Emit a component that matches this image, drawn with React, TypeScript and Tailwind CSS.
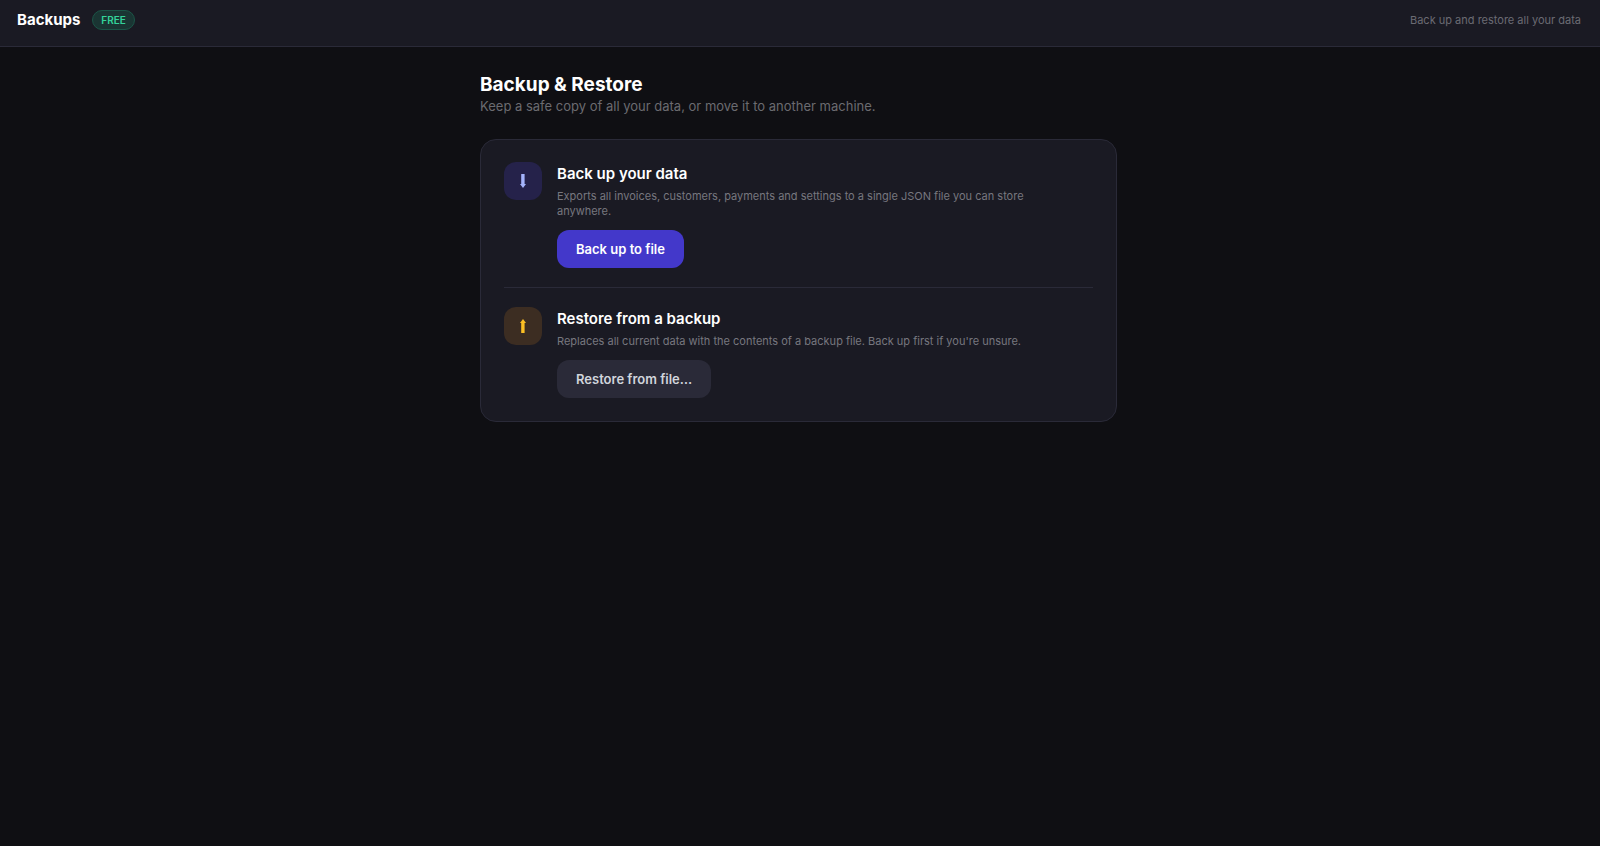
import React from 'react';

interface BackupActionProps {
    title: string;
    description: string;
    icon: React.ReactNode;
    iconClass: string;
    children: React.ReactNode;
}

const ArrowDown: React.FC = () => (
    <svg width="8" height="14" viewBox="0 0 8 14" fill="currentColor" aria-hidden="true">
        <path d="M2.2 0h3.4v10H7L4 14 1 10h1.2z" />
    </svg>
);

const ArrowUp: React.FC = () => (
    <svg width="8" height="14" viewBox="0 0 8 14" fill="currentColor" aria-hidden="true">
        <path d="M2.2 14h3.4V4H7L4 0 1 4h1.2z" />
    </svg>
);

const BackupAction: React.FC<BackupActionProps> = ({ title, description, icon, iconClass, children }) => (
    <div className="flex items-start gap-[15px]">
        <div className={`flex size-[38px] shrink-0 items-center justify-center rounded-xl ${iconClass}`}>
            {icon}
        </div>
        <div className="min-w-0 flex-1">
            <h2 className="mb-[3px] text-[15px] leading-6 font-semibold text-white">{title}</h2>
            <p className="mb-[11px] max-w-[510px] text-[11px] leading-[15px] text-[#77777f]">{description}</p>
            {children}
        </div>
    </div>
);

export default function App() {
    return (
        <div className="min-h-screen bg-[#0f0f13] font-['Inter',sans-serif]">
            <header className="flex items-center justify-between border-b border-[#2a2a38] bg-[#1a1a23] pt-[10px] pr-[19px] pb-4 pl-[17px]">
                <div className="flex items-center gap-3">
                    <h1 className="text-[15px] leading-5 font-bold text-white">Backups</h1>
                    <span className="rounded-full border border-[#1b5547] bg-[#1a3533] px-2 text-[10px] leading-[18px] font-semibold text-[#34d399]">
                        FREE
                    </span>
                </div>
                <span className="text-[11px] leading-5 text-[#6b6b73]">Back up and restore all your data</span>
            </header>

            <main className="pt-6 pr-[19px] pl-4">
                <div className="mx-auto max-w-[637px]">
                    <h1 className="text-[19px] leading-[27px] font-bold text-white">Backup &amp; Restore</h1>
                    <p className="mb-[25px] text-[13px] leading-4 text-[#6b6b70]">
                        Keep a safe copy of all your data, or move it to another machine.
                    </p>

                    <section className="rounded-2xl border border-[#2a2a38] bg-[#1a1a23] px-[23px] pt-[22px] pb-[23px]">
                        <BackupAction
                            title="Back up your data"
                            description="Exports all invoices, customers, payments and settings to a single JSON file you can store anywhere."
                            icon={<ArrowDown />}
                            iconClass="bg-[#25224a] text-[#a5b4fc]"
                        >
                            <button
                                type="button"
                                className="rounded-xl bg-[#4338ca] px-[19px] text-[13px] leading-[38px] font-semibold text-white hover:bg-indigo-600"
                            >
                                Back up to file
                            </button>
                        </BackupAction>

                        <hr className="my-[19px] border-[#2a2a38]" />

                        <BackupAction
                            title="Restore from a backup"
                            description="Replaces all current data with the contents of a backup file. Back up first if you're unsure."
                            icon={<ArrowUp />}
                            iconClass="bg-[#3c2d22] text-[#fbbf24]"
                        >
                            <button
                                type="button"
                                className="rounded-xl bg-[#2a2a38] px-[19px] text-[13px] leading-[38px] font-semibold text-gray-300 hover:bg-[#34344a]"
                            >
                                Restore from file…
                            </button>
                        </BackupAction>
                    </section>
                </div>
            </main>
        </div>
    );
}
